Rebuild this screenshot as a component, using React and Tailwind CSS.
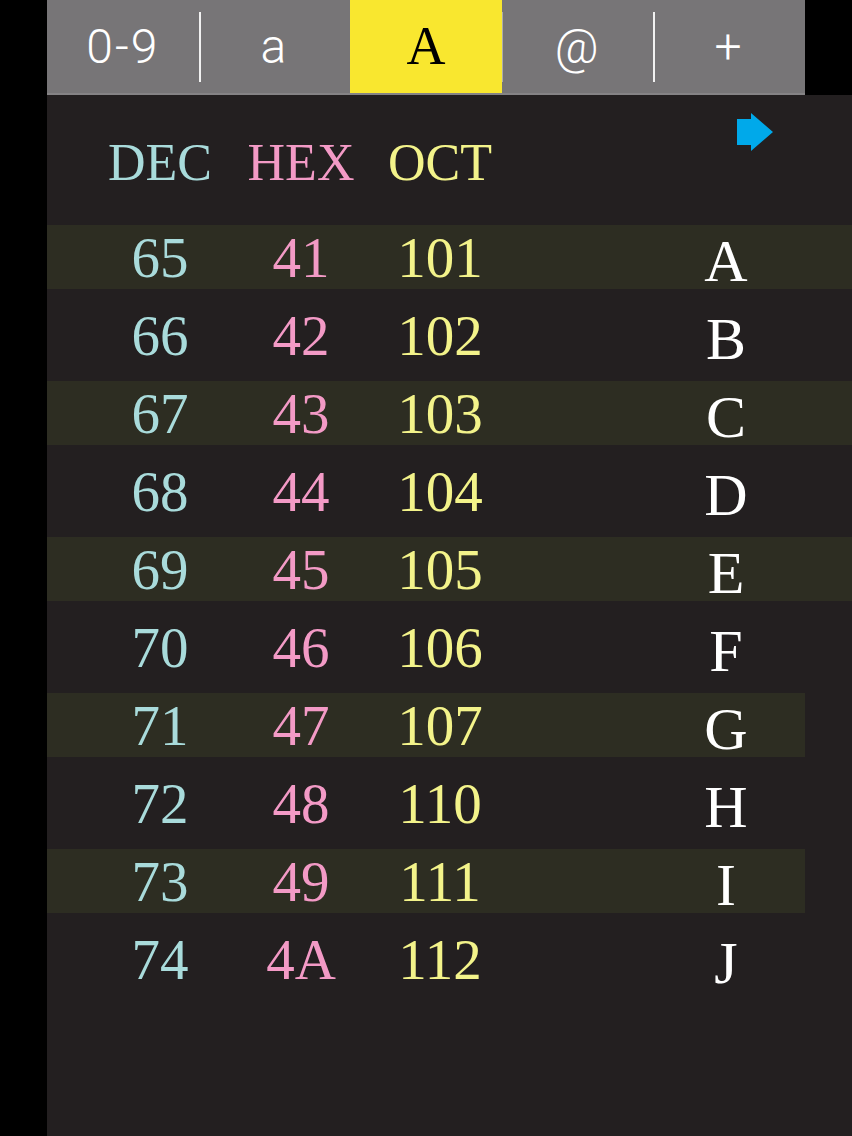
import React from 'react';

const tabs = [
  { label: '0-9', divider: true },
  { label: 'a' },
  { label: 'A', active: true },
  { label: '@', divider: true, faint: true },
  { label: '+' },
];

const rows = [
  [65, '41', '101', 'A'],
  [66, '42', '102', 'B'],
  [67, '43', '103', 'C'],
  [68, '44', '104', 'D'],
  [69, '45', '105', 'E'],
  [70, '46', '106', 'F'],
  [71, '47', '107', 'G'],
  [72, '48', '110', 'H'],
  [73, '49', '111', 'I'],
  [74, '4A', '112', 'J'],
];

const serif = { fontFamily: '"Liberation Serif", serif' };

function ArrowIcon() {
  return (
    <svg width="37" height="38" viewBox="0 0 37 38">
      <path d="M0 6 H14 V0 L36 19 L14 38 V32 H0 Z" fill="#00a9ea" />
    </svg>
  );
}

function Row({ r, i }) {
  const striped = i % 2 === 0;
  // las últimas franjas no llegan al borde derecho
  const width = i >= 6 ? 'w-[758px]' : 'w-full';
  return (
    <div
      className={`h-[64px] ${width} flex items-center pl-[43px] ${striped ? 'bg-[#2d2d22]' : ''}`}
      style={serif}
    >
      <div className="w-[140px] text-center text-[57px] leading-none text-[#a9dbdb]">{r[0]}</div>
      <div className="w-[142px] text-center text-[57px] leading-none text-[#f39ac6]">{r[1]}</div>
      <div className="w-[136px] text-center text-[57px] leading-none text-[#f3f38a]">{r[2]}</div>
      <div className="w-[148px]" />
      <div className="w-[140px] text-center text-[60px] leading-none text-white pt-[8px]">{r[3]}</div>
    </div>
  );
}

export default function App() {
  return (
    <div className="w-[852px] h-[1136px] bg-black flex flex-col pl-[47px] overflow-hidden">
      {/* barra de pestañas */}
      <div className="w-[758px] h-[95px] flex bg-[#777577] border-b-2 border-[#858385]">
        {tabs.map((t, i) => (
          <div key={i} className="flex-1 flex items-center relative">
            <div
              className={`flex-1 h-full flex items-center justify-center ${
                t.active ? 'bg-[#f9e72f] text-black' : 'text-white'
              }`}
              style={
                t.active
                  ? { fontFamily: '"Liberation Serif", serif', fontSize: 54 }
                  : { fontFamily: 'Roboto, "Liberation Sans", sans-serif', fontSize: 48, fontWeight: 300, letterSpacing: 2 }
              }
            >
              <span>{t.label}</span>
            </div>
            {t.divider && (
              <div className="absolute right-[-2px] top-[12px] w-[2px] h-[70px] bg-white/90 z-10" />
            )}
            {t.faint && (
              <div className="absolute left-0 top-[12px] w-[1px] h-[70px] bg-white/40" />
            )}
          </div>
        ))}
      </div>

      {/* tabla */}
      <div className="flex-1 bg-[#231f20] flex flex-col">
        <div className="h-[130px] flex pl-[43px]" style={serif}>
          <div className="w-[140px] pt-[42px] text-center text-[52px] leading-none text-[#a9dbdb]">DEC</div>
          <div className="w-[142px] pt-[42px] text-center text-[52px] leading-none text-[#f39ac6]">HEX</div>
          <div className="w-[136px] pt-[42px] text-center text-[52px] leading-none text-[#f3f38a]">OCT</div>
          <div className="w-[266px] flex justify-end pt-[18px]">
            <ArrowIcon />
          </div>
        </div>
        <div className="flex flex-col gap-[14px]">
          {rows.map((r, i) => (
            <Row key={r[0]} r={r} i={i} />
          ))}
        </div>
      </div>
    </div>
  );
}
